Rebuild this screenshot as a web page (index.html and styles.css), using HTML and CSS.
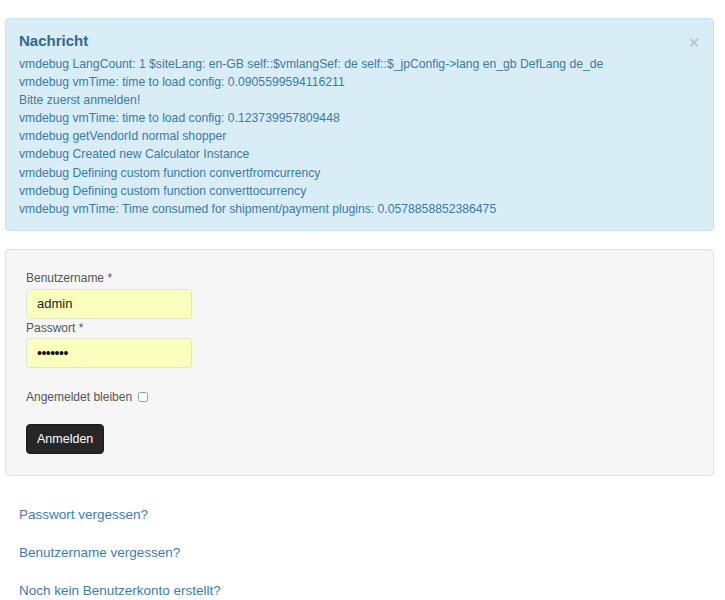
FILE: index.html
```html
<!DOCTYPE html>
<html lang="de">
<head>
    <meta charset="UTF-8">
    <title>Anmelden</title>
    <link rel="stylesheet" href="styles.css">
</head>
<body>
    <div class="page">
        <div class="alert">
            <span class="close">&times;</span>
            <h4>Nachricht</h4>
            <div class="alert-lines">
                <p>vmdebug LangCount: 1 $siteLang: en-GB self::$vmlangSef: de self::$_jpConfig-&gt;lang en_gb DefLang de_de</p>
                <p>vmdebug vmTime: time to load config: 0.0905599594116211</p>
                <p>Bitte zuerst anmelden!</p>
                <p>vmdebug vmTime: time to load config: 0.123739957809448</p>
                <p>vmdebug getVendorId normal shopper</p>
                <p>vmdebug Created new Calculator Instance</p>
                <p>vmdebug Defining custom function convertfromcurrency</p>
                <p>vmdebug Defining custom function converttocurrency</p>
                <p>vmdebug vmTime: Time consumed for shipment/payment plugins: 0.0578858852386475</p>
            </div>
        </div>

        <form class="well login-form">
            <label for="username">Benutzername *</label>
            <input type="text" id="username" value="admin">
            <label for="password">Passwort *</label>
            <input type="password" id="password" value="1234567">
            <div class="remember">
                <label for="remember">Angemeldet bleiben</label>
                <input type="checkbox" id="remember">
            </div>
            <button type="submit" class="btn">Anmelden</button>
        </form>

        <ul class="links">
            <li><a href="#">Passwort vergessen?</a></li>
            <li><a href="#">Benutzername vergessen?</a></li>
            <li><a href="#">Noch kein Benutzerkonto erstellt?</a></li>
        </ul>
    </div>
</body>
</html>
```

FILE: styles.css
```css
* {
    box-sizing: border-box;
    margin: 0;
    padding: 0;
}
body {
    font-family: "Liberation Sans", Arial, sans-serif;
    background-color: #ffffff;
    color: #333333;
    font-size: 12px;
}
.page {
    width: 709px;
    margin-left: 5px;
    padding-top: 18px;
}
.alert {
    position: relative;
    background-color: #d9edf7;
    border: 1px solid #c5e4f1;
    border-radius: 4px;
    color: #3b7ba3;
    padding: 13px 35px 12px 13px;
}
.alert h4 {
    font-size: 15px;
    font-weight: bold;
    line-height: 18px;
    margin-bottom: 5px;
    color: #2f6a8d;
}
.alert-lines p {
    font-size: 12.2px;
    line-height: 18.1px;
}
.close {
    position: absolute;
    top: 15px;
    right: 14px;
    font-size: 17px;
    line-height: 18px;
    color: #b9c9d2;
    font-weight: bold;
}
.well {
    margin-top: 18px;
    background-color: #f6f6f6;
    border: 1px solid #e3e3e3;
    border-radius: 4px;
    box-shadow: inset 0 1px 1px rgba(0,0,0,0.03);
    padding: 19px 20px 21px 20px;
}
.login-form label {
    display: block;
    line-height: 18px;
    color: #555555;
}
.login-form input[type="text"],
.login-form input[type="password"] {
    display: block;
    width: 166px;
    height: 30px;
    margin-top: 2px;
    padding: 0 10px;
    border: 1px solid #e4e4c8;
    border-radius: 3px;
    background-color: #faffbd;
    font-family: "Liberation Sans", Arial, sans-serif;
    font-size: 13px;
    color: #222222;
}
.login-form input[type="password"] {
    margin-top: 1px;
    font-size: 14px;
    letter-spacing: -0.5px;
    color: #111111;
}
.remember {
    display: flex;
    align-items: center;
    margin-top: 20px;
}
.remember label {
    display: inline;
    margin-right: 6px;
}
.remember input {
    width: 10px;
    height: 10px;
    margin: 1px 0 0 0;
    opacity: 0.7;
}
.btn {
    display: block;
    margin-top: 18px;
    height: 30px;
    padding: 0 10px;
    background-color: #262626;
    color: #ffffff;
    border: 1px solid #1a1a1a;
    border-radius: 4px;
    font-family: "Liberation Sans", Arial, sans-serif;
    font-size: 12.5px;
}
.links {
    list-style: none;
    margin-top: 29px;
    padding-left: 14px;
}
.links li {
    line-height: 20px;
    margin-bottom: 18px;
}
.links a {
    color: #3a7cbb;
    text-decoration: none;
    font-size: 13.5px;
}
```
